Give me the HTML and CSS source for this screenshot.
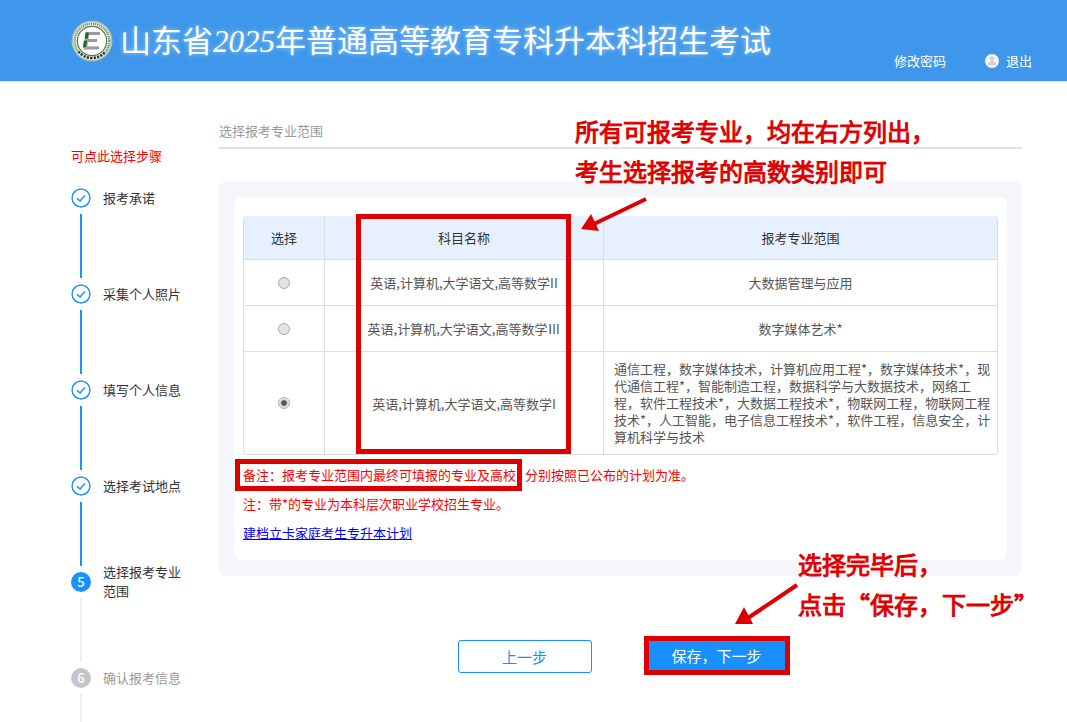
FILE: index.html
```html
<!DOCTYPE html>
<html lang="zh-CN">
<head>
    <meta charset="UTF-8">
    <meta name="viewport" content="width=device-width, initial-scale=1.0">
    <title>山东省2025年普通高等教育专科升本科招生考试</title>
    <link rel="stylesheet" href="styles.css">
</head>
<body>

    <header class="header">
        <svg class="logo" viewBox="0 0 42 42" aria-hidden="true">
            <circle cx="21" cy="21" r="20.5" fill="#a9c2b4"/>
            <circle cx="21" cy="21" r="19" fill="#e9efe6"/>
            <circle cx="21" cy="21" r="17.3" fill="none" stroke="#6b8f6b" stroke-width="2.2" stroke-dasharray="1.2 .9"/>
            <path d="M7.5 31.5a17.3 17.3 0 0 0 27 0" fill="none" stroke="#e9efe6" stroke-width="3.4"/>
            <path d="M7.5 31.5a17.3 17.3 0 0 0 27 0" fill="none" stroke="#333" stroke-width="2.6" stroke-dasharray="2.2 1.2"/>
            <circle cx="21" cy="21" r="14.6" fill="#fff" stroke="#4d8050" stroke-width="1.2"/>
            <path d="M15 12H29v3H15zM15 19H26v3H15zM14 26.500H28v3H14z" fill="#999"/>
            <path d="M15 12h3.500L16 29.500H12.500z" fill="#aaa"/>
            <path d="M14.500 12.500h3.500l-1.200 6-3.200.4zM13 20.500h3.200l-1.200 6.500-3.200.5z" fill="#1d6b2c"/>
        </svg>
        <h1 class="title">山东省<span class="year">2025</span>年普通高等教育专科升本科招生考试</h1>
        <nav class="user-nav">
            <a href="#">修改密码</a>
            <a href="#" class="logout">
                <svg class="avatar" viewBox="0 0 14 14" aria-hidden="true">
                    <circle cx="7" cy="7" r="7" fill="#f6f6f6"/>
                    <circle cx="7" cy="4.700" r="2.400" fill="#d3d3d3"/>
                    <path d="M3 10.500C3 8 4.500 7 7 7s4 1 4 3.500c-1.500 1.200-6.500 1.200-8 0z" fill="#d3d3d3"/>
                </svg>
                退出
            </a>
        </nav>
    </header>

    <div class="layout">
        <!-- Steps -->
        <aside class="sidebar">
            <p class="steps-tip">可点此选择步骤</p>
            <ol class="steps">
                <li class="step done">
                    <svg class="dot" viewBox="0 0 20 20"><circle cx="10" cy="10" r="9"/><path d="M6 10.200l3 2.800 5-5.500"/></svg>
                    <span class="label">报考承诺</span>
                </li>
                <li class="step done">
                    <svg class="dot" viewBox="0 0 20 20"><circle cx="10" cy="10" r="9"/><path d="M6 10.200l3 2.800 5-5.500"/></svg>
                    <span class="label">采集个人照片</span>
                </li>
                <li class="step done">
                    <svg class="dot" viewBox="0 0 20 20"><circle cx="10" cy="10" r="9"/><path d="M6 10.200l3 2.800 5-5.500"/></svg>
                    <span class="label">填写个人信息</span>
                </li>
                <li class="step done">
                    <svg class="dot" viewBox="0 0 20 20"><circle cx="10" cy="10" r="9"/><path d="M6 10.200l3 2.800 5-5.500"/></svg>
                    <span class="label">选择考试地点</span>
                </li>
                <li class="step current">
                    <span class="dot">5</span>
                    <span class="label">选择报考专业范围</span>
                </li>
                <li class="step">
                    <span class="dot">6</span>
                    <span class="label">确认报考信息</span>
                </li>
            </ol>
        </aside>

        <main class="content">
            <h2 class="page-title">选择报考专业范围</h2>

            <div class="callout callout-top">
                <p>所有可报考专业，均在右方列出，</p>
                <p>考生选择报考的高数类别即可</p>
                <svg class="arrow" width="68" height="36" viewBox="0 0 68 36"><path d="M66 2L14 27" stroke="#d00" stroke-width="4"/><path d="M1 32l10-15 8 17z" fill="#d00"/></svg>
            </div>

            <div class="panel">
                <div class="card">
                    <div class="table-box">
                        <table class="majors">
                            <thead>
                                <tr>
                                    <th class="col-pick">选择</th>
                                    <th class="col-subject">科目名称</th>
                                    <th>报考专业范围</th>
                                </tr>
                            </thead>
                            <tbody>
                                <tr>
                                    <td><input type="radio" name="subject" aria-labelledby="s1"></td>
                                    <td id="s1">英语,计算机,大学语文,高等数学II</td>
                                    <td>大数据管理与应用</td>
                                </tr>
                                <tr>
                                    <td><input type="radio" name="subject" aria-labelledby="s2"></td>
                                    <td id="s2">英语,计算机,大学语文,高等数学Ⅲ</td>
                                    <td>数字媒体艺术*</td>
                                </tr>
                                <tr class="tall">
                                    <td><input type="radio" name="subject" aria-labelledby="s3" checked></td>
                                    <td id="s3">英语,计算机,大学语文,高等数学I</td>
                                    <td class="range">通信工程，数字媒体技术，计算机应用工程*，数字媒体技术*，现代通信工程*，智能制造工程，数据科学与大数据技术，网络工程，软件工程技术*，大数据工程技术*，物联网工程，物联网工程技术*，人工智能，电子信息工程技术*，软件工程，信息安全，计算机科学与技术</td>
                                </tr>
                            </tbody>
                        </table>
                        <div class="mark"></div>
                    </div>
                    <p class="note"><span class="note-mark">备注：报考专业范围内最终可填报的专业及高校</span>分别按照已公布的计划为准。</p>
                    <p class="note">注：带*的专业为本科层次职业学校招生专业。</p>
                    <p class="note"><a href="#">建档立卡家庭考生专升本计划</a></p>
                </div>
            </div>

            <div class="actions">
                <button type="button" class="btn">上一步</button>
                <button type="button" class="btn btn-primary">保存，下一步</button>
                <div class="callout callout-save">
                    <p>选择完毕后，</p>
                    <p>点击“保存，下一步”</p>
                    <svg class="arrow" width="66" height="44" viewBox="0 0 66 44"><path d="M63 2L14 35" stroke="#d00" stroke-width="4"/><path d="M1 41l9-17 9 17z" fill="#d00"/></svg>
                </div>
            </div>
        </main>
    </div>

</body>
</html>
```

FILE: styles.css
```css
* { box-sizing: border-box; }
body {
    margin: 0;
    background: #fff;
    color: #333;
    font-family: "Noto Sans CJK SC", sans-serif;
    font-size: 13px;
    line-height: 19px;
}
h1, h2, p, ol { margin: 0; padding: 0; font-weight: normal; }

/* Header */
.header {
    display: flex;
    align-items: center;
    height: 82px;
    padding: 0 35px 0 71px;
    background: #3e97ea;
    border-bottom: 1px solid #cfe4fa;
    color: #fff;
}
.logo { width: 42px; height: 42px; flex: none; }
.title {
    margin-left: 7px;
    font-size: 31px;
    line-height: 40px;
    white-space: nowrap;
    text-shadow: 0 0 5px #9cf;
}
.year { font-family: "Liberation Serif", serif; font-style: italic; }
.user-nav { display: flex; gap: 39px; margin: 40px 0 0 auto; }
.user-nav a { color: #fff; text-decoration: none; white-space: nowrap; }
.logout { display: flex; align-items: center; gap: 7px; }
.avatar { width: 14px; height: 14px; }

.layout { display: flex; padding: 0 45px 0 71px; }

/* Steps */
.sidebar { flex: none; width: 148px; padding-top: 64px; }
.steps-tip { color: #f00; }
.steps { margin-top: 23px; list-style: none; }
.step {
    display: grid;
    grid-template-columns: 20px 78px;
    grid-template-rows: 20px 76px;
    column-gap: 12px;
    align-items: center;
    color: #999;
}
.step::after {
    content: "";
    justify-self: center;
    width: 2px;
    height: 64px;
    background: #eee;
}
.step:last-child { grid-template-rows: 20px 34px; }
.step:last-child::after { align-self: end; height: 28px; }
.step.done, .step.current { color: #333; }
.step.done::after { background: #1890ff; }
.label { padding-bottom: 2px; }
.dot {
    width: 20px;
    height: 20px;
    border-radius: 50%;
    background: #c5c6ca;
    color: #fff;
    font-weight: 500;
    line-height: 20px;
    text-align: center;
}
.current .dot { background: #1890ff; }
.done .dot { background: none; fill: none; stroke: #1890ff; stroke-width: 1.5; }

/* Content */
.content { position: relative; flex: 1; min-width: 0; padding-top: 39px; }
.page-title {
    padding-bottom: 7px;
    border-bottom: 2px solid #e2e2e2;
    color: #999;
    font-size: 13px;
}
.panel {
    margin-top: 32px;
    padding: 16px 15px;
    border-radius: 8px;
    background: #f4f6fb;
}
.card { padding: 19px 9px 13px; border-radius: 8px; background: #fff; }
.table-box { position: relative; margin-bottom: 5px; }
.majors {
    width: 100%;
    border: 1px solid #ddd;
    border-top: 0;
    border-radius: 4px;
    border-spacing: 0;
    table-layout: fixed;
    color: #555;
    line-height: 17px;
    text-align: center;
}
.majors th {
    height: 44px;
    padding: 0;
    background: #e6f0ff;
    border-bottom: 1px solid #ddd;
    color: #333;
    font-weight: normal;
}
.majors td { height: 46px; padding: 0; border-bottom: 1px solid #ddd; }
.majors th + th, .majors td + td { border-left: 1px solid #ddd; }
.majors .tall td { height: 102px; border-bottom: 0; }
.majors .range { padding: 0 5px 2px 10px; text-align: left; }
.col-pick { width: 80px; }
.col-subject { width: 279px; }
.majors input {
    appearance: none;
    display: block;
    width: 12px;
    height: 12px;
    margin: 0 auto;
    border: 1px solid #aaa;
    border-radius: 50%;
    background: #e3e3e3;
}
.majors input:checked { background: radial-gradient(circle, #555 2px, #eee 4px); }

.note { color: #f00; line-height: 29px; }
.note a { color: #00f; }
.note-mark { position: relative; margin-right: 9px; }

/* Red marks and callouts */
.mark {
    position: absolute;
    top: -2px;
    bottom: 1px;
    left: 113px;
    width: 215px;
    border: 5px solid #d00;
}
.note-mark::after {
    content: "";
    position: absolute;
    inset: -6px -6px -7px -8px;
    border: 5px solid #d00;
}
.callout {
    position: absolute;
    z-index: 1;
    color: #d00;
    font-size: 24px;
    line-height: 40px;
    white-space: nowrap;
    -webkit-text-stroke: 1px #d00;
}
.arrow { position: absolute; }
.callout-top { top: 29px; left: 356px; }
.callout-top .arrow { top: 86px; left: 5px; }

.actions {
    position: relative;
    display: flex;
    justify-content: center;
    gap: 52px;
    margin-top: 60px;
    padding-left: 6px;
}
.btn {
    width: 134px;
    height: 33px;
    margin-top: 4px;
    padding: 0;
    border: 1px solid #1890ff;
    border-radius: 3px;
    background: #fff;
    color: #1890ff;
    font-family: inherit;
    font-size: 15px;
}
.btn-primary {
    width: 146px;
    height: 39px;
    margin-top: 0;
    border: 5px solid #d00;
    border-radius: 0;
    background: #1890ff;
    color: #fff;
}
.callout-save { top: -92px; left: 579px; }
.callout-save .arrow { top: 39px; left: -64px; }
```
